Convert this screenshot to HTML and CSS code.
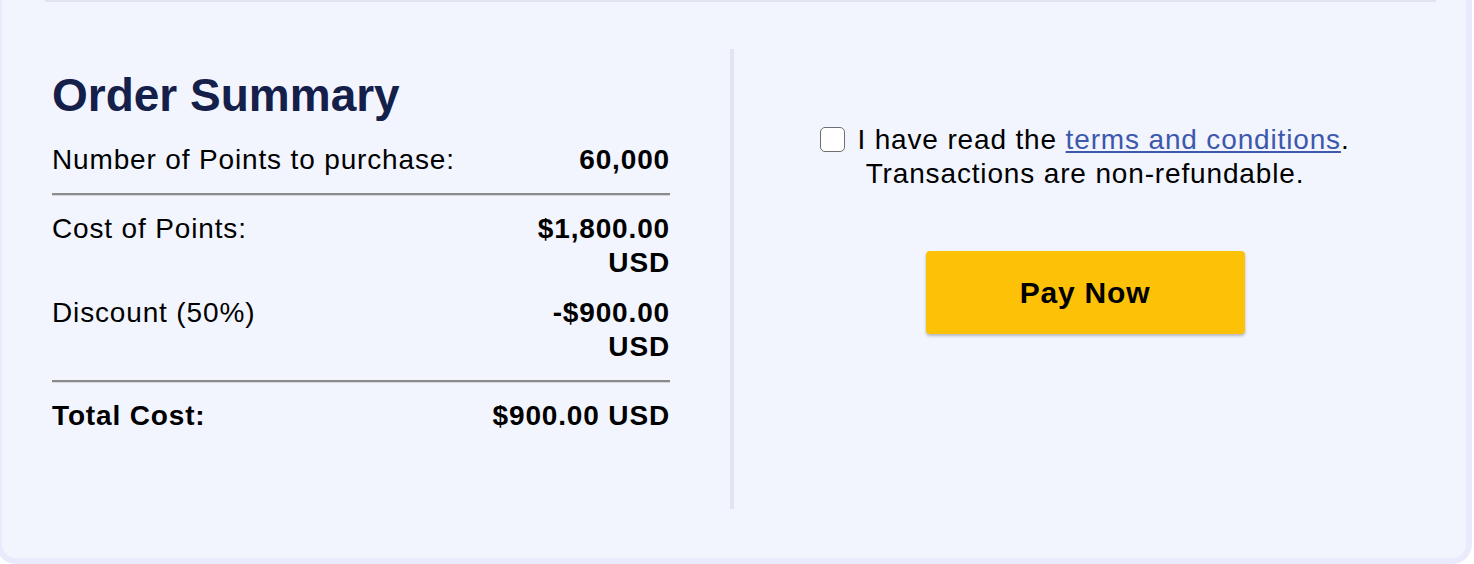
FILE: index.html
```html
<!DOCTYPE html>
<html lang="en">
<head>
    <meta charset="UTF-8">
    <title>Checkout</title>
    <link rel="stylesheet" href="styles.css">
</head>
<body>
<div class="card">
    <div class="card-rule"></div>
    <div class="checkout">
        <!--order summary-->
        <div class="summary-col">
            <h2 class="summary-title">Order Summary</h2>
            <div class="summary-row">
                <span class="label">Number of Points to purchase:</span>
                <span class="value">60,000</span>
            </div>
            <hr class="summary-rule">
            <div class="summary-row">
                <span class="label">Cost of Points:</span>
                <span class="value">$1,800.00 USD</span>
            </div>
            <div class="summary-row">
                <span class="label">Discount (50%)</span>
                <span class="value">-$900.00 USD</span>
            </div>
            <hr class="summary-rule">
            <div class="summary-row total">
                <span class="label">Total Cost:</span>
                <span class="value">$900.00 USD</span>
            </div>
        </div>

        <!--pay-->
        <div class="pay-col">
            <p class="terms">
                <input type="checkbox" class="terms-check" id="agree"><label for="agree">I have read the <a href="#">terms and conditions</a>.</label><br>
                Transactions are non-refundable.
            </p>
            <button class="pay-btn" type="button">Pay Now</button>
        </div>
    </div>
</div>
</body>
</html>
```

FILE: styles.css
```css
* {
    box-sizing: border-box;
}
body {
    margin: 0;
    background: #fff;
    font-family: "Liberation Sans", Arial, sans-serif;
    color: #000;
}
.card {
    width: 1476px;
    margin-left: -4px;
    height: 564px;
    padding: 0 30px 0 43px;
    background: #f2f5fe;
    border: 6px solid #e9eafc;
    border-top: 0;
    border-radius: 0 0 20px 20px;
}
.card-rule {
    height: 2px;
    background: #e0e4ef;
}
.checkout {
    display: grid;
    grid-template-columns: 685px 1fr;
    margin-top: 47px;
    height: 460px;
}
.summary-col {
    padding: 20px 0 0 7px;
    width: 625px;
}
.summary-title {
    margin: 0 0 13px 0;
    font-size: 46px;
    line-height: 53px;
    color: #14204a;
}
.summary-row {
    display: flex;
    justify-content: space-between;
    padding: 8px 0;
    font-size: 28px;
    line-height: 34px;
    letter-spacing: 0.85px;
}
.summary-row .value {
    width: 183px;
    flex-shrink: 0;
    text-align: right;
    font-weight: bold;
}
.summary-row.total .label {
    font-weight: bold;
}
.summary-rule {
    margin: 8px 0;
    height: 0;
    border: 0;
    border-top: 2px solid #8b8b8b;
    border-bottom: 1px solid #d4d6dc;
}
.pay-col {
    border-left: 4px solid #e2e5ef;
    padding-top: 74px;
    text-align: center;
}
.terms {
    margin: 0;
    font-size: 28px;
    line-height: 34px;
    letter-spacing: 0.85px;
}
.terms a {
    color: #3d58ac;
}
.terms-check {
    appearance: none;
    -webkit-appearance: none;
    width: 25px;
    height: 25px;
    margin: 0 12px 0 0;
    vertical-align: -3px;
    background: #fff;
    border: 1.5px solid #6f6f6f;
    border-radius: 5px;
}
.pay-btn {
    display: block;
    margin: 60px auto 0;
    width: 319px;
    height: 83px;
    background: #fdc107;
    border: 0;
    border-radius: 4px;
    box-shadow: 0 2px 3px rgba(0, 0, 0, 0.25);
    font-family: "Liberation Sans", Arial, sans-serif;
    font-size: 30px;
    font-weight: bold;
    letter-spacing: 0.8px;
    color: #000;
}
```
